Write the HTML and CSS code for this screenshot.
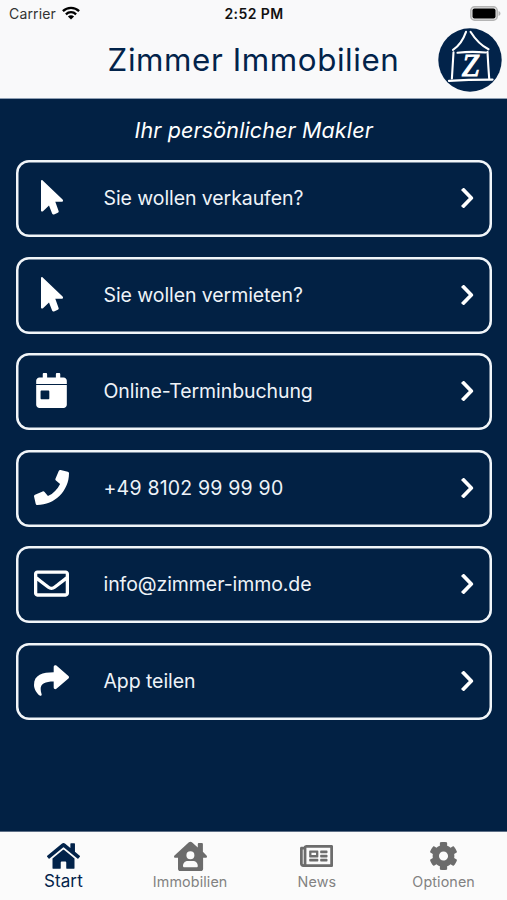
FILE: index.html
```html
<!DOCTYPE html>
<html lang="de">
<head>
<meta charset="utf-8">
<title>Zimmer Immobilien</title>
<link rel="stylesheet" href="styles.css">
</head>
<body>
<svg class="sprite" width="0" height="0">
  <symbol id="pointer" viewBox="0 0 22 35"><path d="M0 1.100C0 0 1 -.3 1.700 .5L21.600 19.500c.8.800.4 2.300-.9 2.300H14.300L17.600 30.900c.3.800 0 1.600-.8 1.900L13 34.400c-.8.300-1.500 0-1.900-.8L8 25.500 2 31.200C1.200 32 0 31.600 0 30.500z"/></symbol>
  <symbol id="chevron" viewBox="0 0 14 20"><path d="M2.600 2.100 10.300 10 2.600 17.900" fill="none" stroke="currentColor" stroke-width="3.700" stroke-linejoin="round" stroke-linecap="square"/></symbol>
</svg>
<div class="app">
  <header class="top">
    <div class="status">
      <div class="carrier">Carrier
        <svg class="wifi" viewBox="0 0 18 14"><g fill="none" stroke="currentColor" stroke-width="2.300"><path d="M.9 5.100C5.400.7 12.600.7 17.100 5.100"/><path d="M3.900 8.300c2.900-2.800 7.300-2.800 10.200 0"/></g><path d="M9 13.600 5.900 10.500c1.800-1.600 4.400-1.600 6.200 0z"/></svg>
      </div>
      <div class="time">2:52 PM</div>
      <svg class="battery" viewBox="0 0 31 15"><rect x=".8" y=".8" width="26.400" height="13.400" rx="3.800" fill="#e4e4e4" stroke="#b4b4b4" stroke-width="1.500"/><rect x="2.500" y="2.500" width="23" height="10" rx="2" fill="#000"/><path d="M28.500 5c2.600.8 2.600 4.200 0 5z" fill="#b4b4b4"/></svg>
    </div>
    <div class="titlebar">
      <h1>Zimmer Immobilien</h1>
      <svg class="logo" viewBox="0 0 64 64"><circle cx="32" cy="32" r="31.700" fill="#02234a"/><g fill="none" stroke="#fff" stroke-width="2.100" stroke-linecap="round" stroke-linejoin="round"><path d="M28 3.800C25.500 11 21.500 17.500 15 21.800"/><path d="M32.500 3.800C37 11 43 17.500 50.500 21.300"/><path d="M15.500 24.200 13.900 50.500M49.500 23.700c.5 10 1 18 1.700 27M19.500 24.800c10-1.200 18-1.200 28-.3"/><path d="M11 52.800c15-1 28-1.200 43.500-1.200" stroke-width="2.300"/></g><text class="initial" x="32.300" y="48.300" text-anchor="middle">Z</text></svg>
    </div>
  </header>
  <main>
    <p class="claim">Ihr persönlicher Makler</p>
    <nav class="cards">
      <a class="card"><span class="icon"><svg width="22" height="35"><use href="#pointer"/></svg></span><span class="label">Sie wollen verkaufen?</span><svg class="chev"><use href="#chevron"/></svg></a>
      <a class="card"><span class="icon"><svg width="22" height="35"><use href="#pointer"/></svg></span><span class="label">Sie wollen vermieten?</span><svg class="chev"><use href="#chevron"/></svg></a>
      <a class="card"><span class="icon"><svg width="31" height="35" viewBox="0 0 448 512"><path d="M0 464c0 26.500 21.500 48 48 48h352c26.500 0 48-21.500 48-48V176H0v288zm64-192c0-8.800 7.200-16 16-16h96c8.800 0 16 7.200 16 16v96c0 8.800-7.200 16-16 16H80c-8.800 0-16-7.200-16-16v-96zM400 64h-48V16c0-8.800-7.200-16-16-16h-32c-8.800 0-16 7.200-16 16v48H160V16c0-8.800-7.200-16-16-16h-32c-8.800 0-16 7.200-16 16v48H48C21.500 64 0 85.500 0 112v48h448v-48c0-26.500-21.500-48-48-48z"/></svg></span><span class="label">Online-Terminbuchung</span><svg class="chev"><use href="#chevron"/></svg></a>
      <a class="card"><span class="icon"><svg width="35" height="35" viewBox="0 0 512 512"><path d="M493.400 24.600l-104-24c-11.300-2.600-22.900 3.300-27.500 13.900l-48 112c-4.200 9.800-1.400 21.300 6.900 28l60.600 49.600c-36 76.700-98.900 140.500-177.200 177.200l-49.600-60.600c-6.800-8.300-18.200-11.100-28-6.900l-112 48C3.900 366.500-2 378.100.6 389.400l24 104C27.100 504.200 36.700 512 48 512c256.100 0 464-207.500 464-464 0-11.200-7.700-20.900-18.600-23.400z"/></svg></span><span class="label phone">+49 8102 99 99 90</span><svg class="chev"><use href="#chevron"/></svg></a>
      <a class="card"><span class="icon"><svg width="35" height="35" viewBox="0 0 512 512"><path d="M464 64H48C21.490 64 0 85.490 0 112v288c0 26.510 21.490 48 48 48h416c26.510 0 48-21.490 48-48V112c0-26.510-21.490-48-48-48zm0 48v40.805c-22.422 18.259-58.168 46.651-134.587 106.490-16.841 13.247-50.201 45.072-73.413 44.701-23.208.375-56.579-31.459-73.413-44.701C106.180 199.465 70.425 171.067 48 152.805V112h416zM48 400V214.398c22.914 18.251 55.409 43.862 104.938 82.646 21.857 17.205 60.134 55.186 103.062 54.955 42.717.231 80.509-37.199 103.053-54.947 49.528-38.783 82.032-64.401 104.947-82.653V400H48z"/></svg></span><span class="label">info@zimmer-immo.de</span><svg class="chev"><use href="#chevron"/></svg></a>
      <a class="card"><span class="icon"><svg width="35" height="35" viewBox="0 0 512 512"><path d="M503.691 189.836L327.687 37.851C312.281 24.546 288 35.347 288 56.015v80.053C127.371 137.907 0 170.100 0 322.326c0 61.441 39.581 122.309 83.333 154.132 13.653 9.931 33.111-2.533 28.077-18.631C66.066 312.814 132.917 274.316 288 272.085V360c0 20.700 24.300 31.453 39.687 18.164l176.004-152c11.071-9.562 11.086-26.753 0-36.328z"/></svg></span><span class="label">App teilen</span><svg class="chev"><use href="#chevron"/></svg></a>
    </nav>
  </main>
  <footer class="tabs">
    <a class="tab active"><svg width="33" height="29.300" viewBox="0 0 576 512"><path d="M280.370 148.260L96 300.110V464a16 16 0 0 0 16 16l112.060-.29a16 16 0 0 0 15.920-16V368a16 16 0 0 1 16-16h64a16 16 0 0 1 16 16v95.640a16 16 0 0 0 16 16.050L464 480a16 16 0 0 0 16-16V300L295.670 148.260a12.190 12.190 0 0 0-15.300 0zM571.600 251.470L488 182.560V44.050a12 12 0 0 0-12-12h-56a12 12 0 0 0-12 12v72.610L318.470 43a48 48 0 0 0-61 0L4.340 251.470a12 12 0 0 0-1.600 16.900l25.500 31A12 12 0 0 0 45.150 301l235.220-193.740a12.190 12.190 0 0 1 15.300 0L530.900 301a12 12 0 0 0 16.900-1.600l25.500-31a12 12 0 0 0-1.700-16.930z"/></svg><span>Start</span></a>
    <a class="tab"><svg width="33" height="30" viewBox="0 0 33 30"><path fill-rule="evenodd" d="M1.300 16.800c-1.300 0-1.700-1.600-.8-2.400L14.900 1.300c.9-.8 2.100-.8 3 0l5.900 5.100V3.100c0-.7.500-1.200 1.200-1.200h2.700c.7 0 1.200.5 1.200 1.200v7.600l3.600 3.700c.9.900.5 2.400-.8 2.400h-2.600v11.100c0 1.200-1 2.100-2.200 2.100H6.200c-1.200 0-2.200-.9-2.200-2.100V16.800zM16.400 10.200a4 4 0 1 0 0 8 4 4 0 0 0 0-8zM13.600 20c-2.700 0-4.600 2.200-4.600 4.900 0 .8.600 1.300 1.300 1.300h12.200c.8 0 1.300-.5 1.300-1.300 0-2.700-1.900-4.900-4.600-4.900z"/></svg><span>Immobilien</span></a>
    <a class="tab"><svg width="33" height="29.300" viewBox="0 0 576 512"><path d="M552 64H112c-20.858 0-38.643 13.377-45.248 32H24c-13.255 0-24 10.745-24 24v272c0 30.928 25.072 56 56 56h496c13.255 0 24-10.745 24-24V88c0-13.255-10.745-24-24-24zM48 392V144h16v248c0 4.411-3.589 8-8 8s-8-3.589-8-8zm480 8H111.422c.374-2.614.578-5.283.578-8V112h416v288zM172 280h136c6.627 0 12-5.373 12-12v-96c0-6.627-5.373-12-12-12H172c-6.627 0-12 5.373-12 12v96c0 6.627 5.373 12 12 12zm28-80h80v40h-80v-40zm-40 140v-24c0-6.627 5.373-12 12-12h136c6.627 0 12 5.373 12 12v24c0 6.627-5.373 12-12 12H172c-6.627 0-12-5.373-12-12zm192 0v-24c0-6.627 5.373-12 12-12h104c6.627 0 12 5.373 12 12v24c0 6.627-5.373 12-12 12H364c-6.627 0-12-5.373-12-12zm0-144v-24c0-6.627 5.373-12 12-12h104c6.627 0 12 5.373 12 12v24c0 6.627-5.373 12-12 12H364c-6.627 0-12-5.373-12-12zm0 72v-24c0-6.627 5.373-12 12-12h104c6.627 0 12 5.373 12 12v24c0 6.627-5.373 12-12 12H364c-6.627 0-12-5.373-12-12z"/></svg><span>News</span></a>
    <a class="tab"><svg width="29" height="29" viewBox="0 0 512 512"><path d="M487.400 315.700l-42.600-24.600c4.300-23.200 4.300-47 0-70.200l42.600-24.600c4.900-2.800 7.100-8.600 5.500-14-11.100-35.600-30-67.800-54.700-94.600-3.800-4.100-10-5.100-14.800-2.300L380.800 110c-17.900-15.400-38.500-27.300-60.800-35.100V25.800c0-5.600-3.900-10.500-9.400-11.700-36.700-8.200-74.300-7.800-109.200 0-5.500 1.200-9.400 6.100-9.400 11.700V75c-22.200 7.900-42.800 19.800-60.800 35.100L88.700 85.500c-4.900-2.800-11-1.900-14.800 2.300-24.700 26.700-43.600 58.900-54.700 94.600-1.700 5.400.6 11.200 5.500 14L67.300 221c-4.300 23.200-4.300 47 0 70.200l-42.600 24.600c-4.900 2.800-7.100 8.600-5.500 14 11.100 35.600 30 67.800 54.700 94.600 3.800 4.100 10 5.100 14.800 2.300l42.600-24.600c17.900 15.400 38.500 27.300 60.800 35.100v49.200c0 5.600 3.900 10.500 9.400 11.700 36.700 8.200 74.300 7.800 109.200 0 5.500-1.200 9.400-6.100 9.400-11.700v-49.200c22.200-7.900 42.800-19.800 60.800-35.100l42.600 24.600c4.900 2.800 11 1.900 14.800-2.300 24.700-26.700 43.600-58.900 54.700-94.600 1.500-5.500-.7-11.300-5.600-14.100zM256 336c-44.100 0-80-35.900-80-80s35.900-80 80-80 80 35.900 80 80-35.900 80-80 80z"/></svg><span>Optionen</span></a>
  </footer>
</div>
</body>
</html>
```
FILE: styles.css
```css
* { box-sizing: border-box; }
body { margin: 0; font-family: Inter, sans-serif; }
svg { display: block; flex: none; fill: currentColor; }
.sprite { position: absolute; }
.app { display: flex; flex-direction: column; height: 900px; background: #022144; overflow: hidden; }

.top { height: 99px; flex: none; background: #f9f9fa; border-bottom: 1px solid #8fa0b4; }
.status { display: grid; grid-template-columns: 1fr auto 1fr; align-items: center; height: 27px; padding: 0 6px 0 9px; color: #111; }
.carrier { display: flex; align-items: center; gap: 6px; font-size: 14px; letter-spacing: .15px; color: #333; }
.wifi { width: 18px; height: 14px; color: #000; margin-top: -2px; }
.time { margin-left: -2px; font-size: 14px; font-weight: 600; letter-spacing: .4px; }
.battery { width: 31px; height: 15px; justify-self: end; }
.titlebar { display: flex; align-items: center; height: 65px; padding: 0 5px 0 69px; }
h1 { flex: 1; margin: 0; text-align: center; font-size: 31.3px; font-weight: 430; letter-spacing: .6px; line-height: 66px; color: #02234a; white-space: nowrap; }
.logo { width: 64px; height: 64px; }
.initial { font: italic 31px "Liberation Serif", serif; fill: #fff; stroke: #fff; stroke-width: 1px; }

main { flex: 1; padding: 15px 15px 0 15.5px; color: #fff; }
.claim { margin: 0 0 14px; height: 32px; line-height: 32px; text-align: center; font-size: 21.5px; letter-spacing: .13px; font-style: italic; }
.cards { display: flex; flex-direction: column; gap: 19.5px; }
.card { display: flex; align-items: center; height: 77px; padding: 0 17px 0 16px; box-shadow: inset 0 0 0 2.5px #f1f5f9; border-radius: 13px; }
.icon { display: flex; justify-content: center; width: 40px; padding-bottom: 2px; }
.label { flex: 1; padding: 0 0 1px 32px; font-size: 19.5px; letter-spacing: -.08px; color: #eef3f8; }
.label.phone { letter-spacing: .2px; }
.chev { width: 14px; height: 20px; margin-bottom: 1px; }

.tabs { display: grid; grid-template-columns: repeat(4, 1fr); height: 69px; flex: none; background: #fbfbfb; border-top: 1px solid #5d6f86; }
.tab { display: flex; flex-direction: column; align-items: center; padding-top: 9px; font-size: 14.3px; letter-spacing: .12px; color: #828282; }
.tab svg { height: 30px; color: #6c6c6c; }
.tab span { line-height: 22px; }
.tab.active, .tab.active svg { color: #02234a; }
.tab.active { font-size: 17px; }
.tab.active span { line-height: 20px; }
```
